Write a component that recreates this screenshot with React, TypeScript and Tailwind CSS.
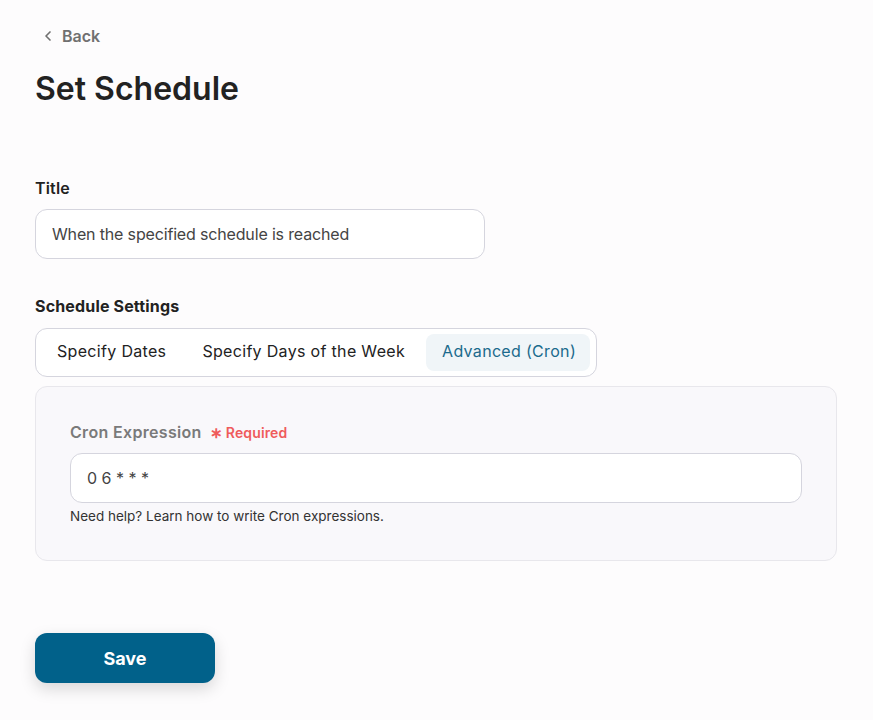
import { ChevronLeft } from "lucide-react";

const tabs = ["Specify Dates", "Specify Days of the Week", "Advanced (Cron)"];

export default function App() {
  const active = 2;

  return (
    <div className="min-h-[720px] w-full bg-[#fdfcfd] font-['Inter',sans-serif] text-[#222]">
      <div className="px-[35px] pt-[24px]">
        <button className="flex items-center gap-[6px] pl-[5px] text-[16px] font-semibold text-[#707070]">
          <ChevronLeft size={16} strokeWidth={2.5} />
          Back
        </button>

        <h1 className="mt-[21px] text-[32px] font-semibold leading-[40px] text-[#222]">Set Schedule</h1>

        <div className="mt-[68px] flex flex-col">
          <label htmlFor="title" className="text-[16px] font-semibold leading-[22px] tracking-[0.01em] text-[#222]">
            Title
          </label>
          <input
            id="title"
            type="text"
            defaultValue="When the specified schedule is reached"
            className="mt-[10px] h-[50px] w-[450px] rounded-[12px] border border-[#d5d5de] bg-white px-[16px] text-[16px] tracking-[-0.01em] text-[#444] focus:outline-none"
          />
        </div>

        <div className="mt-[36px] flex flex-col">
          <span className="text-[16px] font-bold leading-[22px] tracking-[0.01em] text-[#222]">Schedule Settings</span>
          <div className="mt-[11px] flex h-[49px] w-[562px] items-center gap-[6px] rounded-[12px] border border-[#d5d5de] bg-white px-[6px]">
            {tabs.map((tab, i) => (
              <button
                key={tab}
                className={
                  i === active
                    ? "h-[37px] shrink-0 whitespace-nowrap rounded-[8px] bg-[#f0f5f8] pb-[3px] pl-[16px] pr-[14px] text-[16px] tracking-[0.02em] text-[#1b6a8c]"
                    : "h-[37px] shrink-0 whitespace-nowrap rounded-[8px] px-[15px] pb-[3px] text-[16px] tracking-[0.02em] text-[#222]"
                }
              >
                {tab}
              </button>
            ))}
          </div>
        </div>

        <div className="mt-[9px] w-[802px] rounded-[12px] border border-[#e8e7ec] bg-[#f9f8fb] px-[34px] pb-[35px] pt-[34px]">
          <div className="flex items-center gap-[8px]">
            <label htmlFor="cron" className="text-[16px] font-semibold leading-[22px] tracking-[0.02em] text-[#7a7a7a]">
              Cron Expression
            </label>
            <span className="flex items-center gap-[3px] text-[14px] font-semibold tracking-[0.01em] text-[#ef5b5b]">
              <span className="text-[15px] leading-none">∗</span>
              Required
            </span>
          </div>
          <input
            id="cron"
            type="text"
            defaultValue="0 6 * * *"
            className="mt-[10px] h-[50px] w-full rounded-[12px] border border-[#d5d5de] bg-white px-[16px] text-[16px] text-[#444] focus:outline-none"
          />
          <p className="mt-[4px] text-[13.5px] leading-[18px] text-[#333]">Need help? Learn how to write Cron expressions.</p>
        </div>

        <button className="mt-[72px] h-[50px] w-[180px] rounded-[12px] bg-[#01618a] text-[18px] font-bold text-white shadow-[0_6px_16px_rgba(0,0,0,0.15)]">
          Save
        </button>
      </div>
    </div>
  );
}
